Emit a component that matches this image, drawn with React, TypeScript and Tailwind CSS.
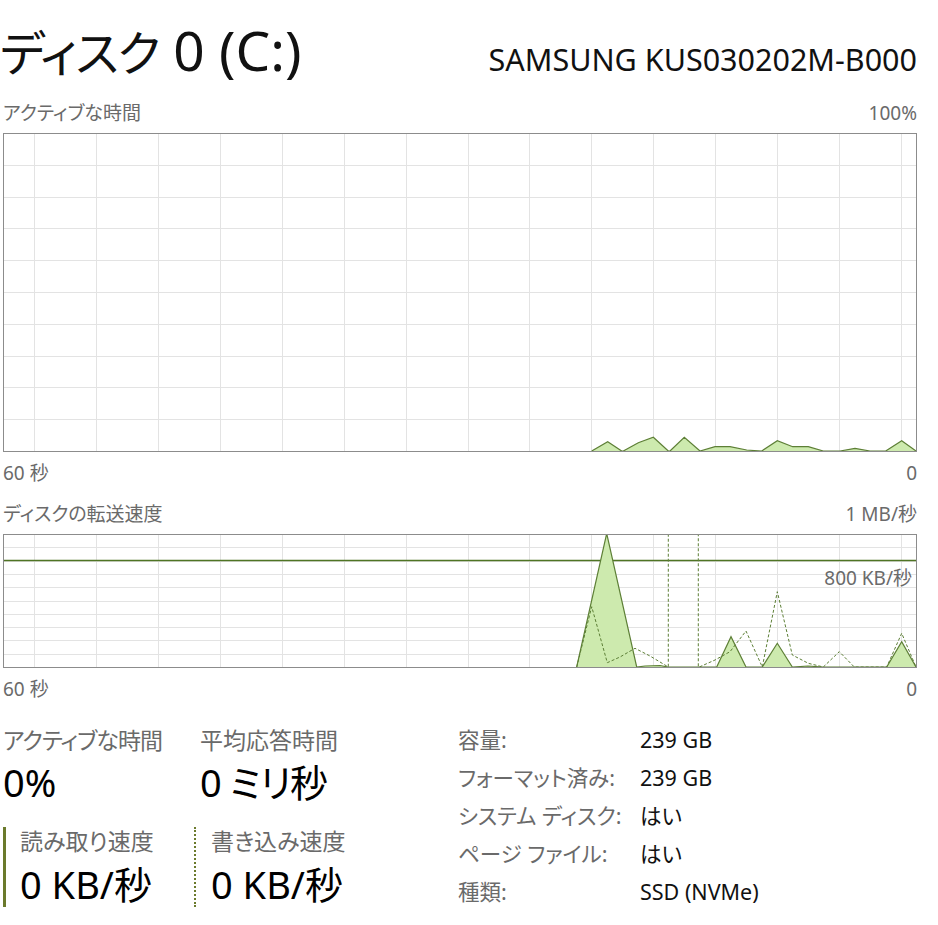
import React from "react";

const GX = Array.from({ length: 15 }, (_, i) => 34 + i * 61.93);

const c1: number[][] = [
  [591.7, 451], [607.7, 441.7], [621.7, 451], [623.3, 451], [638.3, 442.7], [653.3, 437.3],
  [668.3, 451], [670, 451], [684.3, 437.3], [700, 451], [715, 446.7], [730, 446.7],
  [746.7, 450], [761.7, 451], [777.3, 440.7], [792.7, 446.7], [808.3, 446.7], [823.3, 451],
  [840, 451], [855, 448.3], [870, 451], [885.7, 451], [901.7, 440.7], [916, 451],
];

const read: number[][] = [
  [576.7, 667], [606.7, 533.5], [636.7, 667], [645, 666], [660, 665.5], [668, 667],
  [716.7, 667], [731, 636.7], [746, 667], [762.3, 667], [777.3, 643.3], [792.3, 667],
  [808, 666], [823, 667], [886.7, 667], [901.7, 641.7], [916, 667],
];

const write: number[][] = [
  [576.7, 667], [591.7, 606.7], [607.3, 662.7], [620, 657], [635, 648.3], [650, 656],
  [668.3, 667], [668.3, 400], [698.3, 400], [698.3, 667], [699.3, 667], [715, 660],
  [730, 651.7], [746, 631], [762.3, 667], [777.3, 591.7], [792.3, 655], [808.3, 663.3],
  [823.3, 667], [839.3, 651.7], [854.3, 667], [886.7, 667], [901.7, 633.3], [916, 667],
];

const pts = (a: number[][]) => a.map((p) => p.join(",")).join(" ");

const FILL = "#cdeaae";
const LINE = "#5d7f36";

function Chart1() {
  const rows = Array.from({ length: 9 }, (_, i) => 133 + (i + 1) * 31.8);
  return (
    <div className="h-[319px] w-[914px] border border-[#8c8c8c]">
      <svg width="912" height="317" viewBox="4 134 912 317" className="block">
        {GX.map((x) => (
          <line key={x} x1={Math.round(x) + 0.5} x2={Math.round(x) + 0.5} y1={0} y2={1000} stroke="#e3e3e3" strokeWidth={1} />
        ))}
        {rows.map((y) => (
          <line key={y} x1={0} x2={1000} y1={Math.round(y) + 0.5} y2={Math.round(y) + 0.5} stroke="#e3e3e3" strokeWidth={1} />
        ))}
        <polygon points={pts(c1)} fill={FILL} />
        <polyline points={pts(c1)} fill="none" stroke={LINE} strokeWidth={1.2} strokeLinejoin="miter" />
      </svg>
    </div>
  );
}

function Chart2() {
  const rows = Array.from({ length: 9 }, (_, i) => 534 + (i + 1) * 13.3);
  return (
    <div className="relative h-[134px] w-[914px] border border-[#8c8c8c]">
      <svg width="912" height="132" viewBox="4 535 912 132" className="block">
        {GX.map((x) => (
          <line key={x} x1={Math.round(x) + 0.5} x2={Math.round(x) + 0.5} y1={0} y2={1000} stroke="#e3e3e3" strokeWidth={1} />
        ))}
        {rows.map((y) => (
          <line key={y} x1={0} x2={1000} y1={Math.round(y) + 0.5} y2={Math.round(y) + 0.5} stroke="#e3e3e3" strokeWidth={1} />
        ))}
        <line x1={0} x2={1000} y1={560.5} y2={560.5} stroke="#4f7424" strokeWidth={1.3} />
        <polygon points={pts(read)} fill={FILL} />
        <polyline points={pts(read)} fill="none" stroke={LINE} strokeWidth={1.2} />
        <polyline points={pts(write)} fill="none" stroke={LINE} strokeWidth={1} strokeDasharray="3 2" />
      </svg>
      <div className="absolute right-[4px] top-[34px] text-[19px] leading-none text-[#6a6a6a]">800 KB/秒</div>
    </div>
  );
}

export default function App() {
  const font = {
    fontFamily: '"Noto Sans", "Noto Sans CJK JP", sans-serif',
  };
  return (
    <div
      className="h-[925px] w-[938px] overflow-hidden bg-white pl-[3px] pr-[21px] text-black [font-feature-settings:'palt']"
      style={font}
    >
      {/* Header */}
      <div className="flex h-[96px] items-baseline justify-between pt-[22px]">
        <div className="-ml-[3px] leading-none text-[#111]">
          <span className="text-[48px] tracking-[-1.5px]">ディスク</span>
          <span className="text-[55px]"> 0 (C:)</span>
        </div>
        <div className="text-[30.5px] leading-none text-[#111]">SAMSUNG KUS030202M-B000</div>
      </div>

      <div className="flex h-[37px] justify-between pt-[8px] text-[19px] leading-none text-[#6a6a6a]">
        <span>アクティブな時間</span>
        <span>100%</span>
      </div>

      <Chart1 />

      <div className="flex h-[37px] justify-between pt-[12px] text-[19px] leading-none text-[#6a6a6a]">
        <span>60 秒</span>
        <span>0</span>
      </div>
      <div className="flex h-[45px] justify-between pt-[16px] text-[19px] leading-none text-[#6a6a6a]">
        <span>ディスクの転送速度</span>
        <span>1 MB/秒</span>
      </div>

      <Chart2 />

      <div className="flex h-[44px] justify-between pt-[12px] text-[19px] leading-none text-[#6a6a6a]">
        <span>60 秒</span>
        <span>0</span>
      </div>

      {/* Stats */}
      <div className="flex pt-[14px]">
        <div className="w-[455px]">
          <div className="flex">
            <div className="w-[197px]">
              <div className="text-[23px] leading-[28px] tracking-[-1px] text-[#6a6a6a]">アクティブな時間</div>
              <div className="mt-[6px] text-[38px] leading-[44px]">0%</div>
            </div>
            <div>
              <div className="text-[23px] leading-[28px] text-[#6a6a6a]">平均応答時間</div>
              <div className="mt-[6px] text-[38px] leading-[44px] tracking-[-1px]">0 ミリ秒</div>
            </div>
          </div>
          <div className="mt-[23px] flex">
            <div className="w-[191px] border-l-[3px] border-[#6b7a2c] pl-[14px]">
              <div className="text-[23px] leading-[28px] text-[#6a6a6a]">読み取り速度</div>
              <div className="mt-[6px] text-[38px] leading-[46px]">0 KB/秒</div>
            </div>
            <div className="border-l-[2px] border-dotted border-[#6b7a2c] pl-[15px]">
              <div className="text-[23px] leading-[28px] text-[#6a6a6a]">書き込み速度</div>
              <div className="mt-[6px] text-[38px] leading-[46px]">0 KB/秒</div>
            </div>
          </div>
        </div>
        <div className="grid grid-cols-[182px_auto] gap-y-[9.3px] text-[21.5px] leading-[28px]">
          <div className="text-[#6a6a6a]">容量:</div>
          <div className="text-[#111]">239 GB</div>
          <div className="text-[#6a6a6a]">フォーマット済み:</div>
          <div className="text-[#111]">239 GB</div>
          <div className="text-[#6a6a6a]">システム ディスク:</div>
          <div className="text-[#111]">はい</div>
          <div className="text-[#6a6a6a]">ページ ファイル:</div>
          <div className="text-[#111]">はい</div>
          <div className="text-[#6a6a6a]">種類:</div>
          <div className="text-[#111]">SSD (NVMe)</div>
        </div>
      </div>
    </div>
  );
}
